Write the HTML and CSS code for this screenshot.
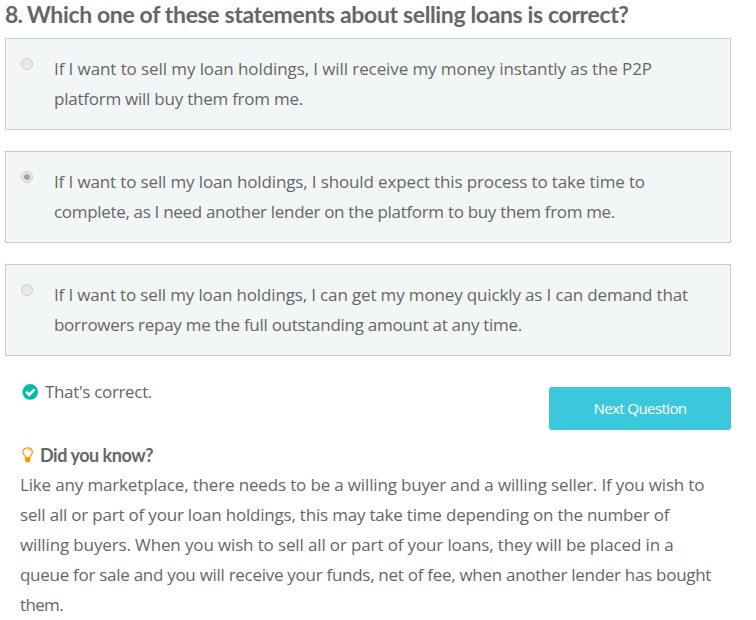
FILE: index.html
```
<!DOCTYPE html>
<html lang="en">
<head>
<meta charset="utf-8">
<title>Question 8</title>
<link rel="stylesheet" href="styles.css">
</head>
<body>
<main class="quiz">
  <h1 class="question"><span class="number">8. </span>Which one of these statements about selling loans is correct?</h1>
  <div class="options">
    <label class="option">
      <span class="radio"></span>
      <span class="text"><span class="line o1">If I want to sell my loan holdings, I will receive my money instantly as the P2P</span>
      <span class="line o2">platform will buy them from me.</span></span>
    </label>
    <label class="option">
      <span class="radio checked"></span>
      <span class="text"><span class="line o3">If I want to sell my loan holdings, I should expect this process to take time to</span>
      <span class="line o4">complete, as I need another lender on the platform to buy them from me.</span></span>
    </label>
    <label class="option">
      <span class="radio"></span>
      <span class="text"><span class="line o5">If I want to sell my loan holdings, I can get my money quickly as I can demand that</span>
      <span class="line o6">borrowers repay me the full outstanding amount at any time.</span></span>
    </label>
  </div>
  <div class="result">
    <p class="verdict">
      <svg class="check" viewBox="0 0 16 16" width="16" height="16"><circle cx="8.2" cy="7.9" r="7.8" fill="#00bfa0"/><path d="M4 7.7l3.1 3.1 5.5-5.4" fill="none" stroke="#fff" stroke-width="2.6"/></svg>
      <span class="o7">That's correct.</span>
    </p>
    <button class="next" type="button">Next Question</button>
  </div>
  <section class="know">
    <h2 class="know-title">
      <svg class="bulb" viewBox="0 0 12 16" width="12" height="16"><path d="M3.7 10.6C3.6 8.7.8 7.6.8 5 .8 2.5 2.9.8 5.6.8s4.8 1.7 4.8 4.2c0 2.6-2.7 3.7-2.8 5.6z" fill="none" stroke="#ff9800" stroke-width="1.2"/><path d="M5.8 2.8c1.4 0 2.3.7 2.4 1.9" fill="none" stroke="#ff9800" stroke-width=".8"/><path d="M3 10.4h5.3v3.7L7 15.6H4.3L3 14.1z" fill="#ff9800"/></svg>
      <span>Did you know?</span>
    </h2>
    <p class="copy"><span class="line k1">Like any marketplace, there needs to be a willing buyer and a willing seller. If you wish to</span>
    <span class="line k2">sell all or part of your loan holdings, this may take time depending on the number of</span>
    <span class="line k3">willing buyers. When you wish to sell all or part of your loans, they will be placed in a</span>
    <span class="line k4">queue for sale and you will receive your funds, net of fee, when another lender has bought</span>
    <span class="line k5">them.</span></p>
  </section>
</main>
</body>
</html>
```
FILE: styles.css
```
* { box-sizing: border-box; }
body {
  margin: 0;
  background: #fff;
  color: #666;
  font: 17px/30px "Open Sans", "Noto Sans", sans-serif;
  overflow: hidden;
}
h1, h2, p { margin: 0; }
.quiz { width: 731px; padding-left: 5px; }
.question {
  height: 38px;
  font: bold 23px/29px Lato, sans-serif;
  letter-spacing: -0.36px;
  white-space: nowrap;
}
.number { letter-spacing: -0.9px; }
.options { display: flex; flex-direction: column; gap: 21px; }
.option {
  display: flex;
  height: 92px;
  padding: 15px;
  border: 1px solid #ccc;
  background: #f2f6f7;
}
.radio {
  flex: none;
  width: 12px;
  height: 12px;
  margin: 4px 21px 0 0;
  border: 1px solid #c9cbcc;
  border-radius: 50%;
  background: linear-gradient(#e4e5e5, #ebecec);
}
.checked { background: radial-gradient(circle, #a3a5a5 2.6px, #e8e9e9 3.3px); }
.line { display: block; white-space: nowrap; }
.o1 { letter-spacing: -0.092px; }
.o2 { letter-spacing: -0.24px; }
.o3 { letter-spacing: -0.134px; }
.o4 { letter-spacing: -0.317px; }
.o5 { letter-spacing: -0.149px; }
.o6 { letter-spacing: -0.281px; }
.o7 { letter-spacing: -0.335px; }
.k1 { letter-spacing: -0.158px; }
.k2 { letter-spacing: -0.2px; }
.k3 { letter-spacing: -0.135px; }
.k4 { letter-spacing: -0.283px; }
.k5 { letter-spacing: -0.65px; }
.result {
  display: flex;
  justify-content: space-between;
  height: 84px;
  padding: 21px 0 0 17px;
}
.verdict { display: flex; height: 30px; gap: 7px; }
.check { margin-top: 7px; }
.next {
  width: 182px;
  height: 43px;
  margin-top: 10px;
  padding: 0;
  border: 0;
  border-radius: 3px;
  background: #3bc8dc;
  color: #fff;
  font: 15px/43px "Open Sans", sans-serif;
  letter-spacing: -0.585px;
}
.know { padding-left: 15px; }
.know-title {
  display: flex;
  gap: 6px;
  padding-left: 2px;
  font: bold 18px/30px Lato, sans-serif;
  letter-spacing: -0.463px;
}
.bulb { margin-top: 7px; }
```
